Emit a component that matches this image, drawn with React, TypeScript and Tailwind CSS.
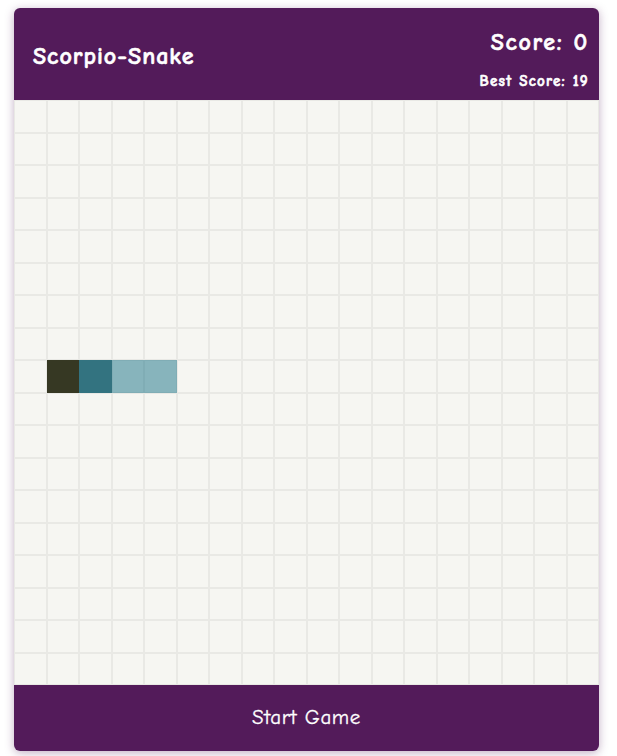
import React from 'react';

const COLS = 18;
const ROWS = 18;

// snake body: [row, col], head first
const snake: Array<[number, number]> = [
  [8, 1],
  [8, 2],
  [8, 3],
  [8, 4],
];

function cellClass(r: number, c: number): string {
  const idx = snake.findIndex(([sr, sc]) => sr === r && sc === c);
  if (idx === 0) return 'bg-[#363823] border-[#363823]';
  if (idx === 1) return 'bg-[#337380] border-[#337380]';
  if (idx > 1) return 'bg-[#87b4bc] border-[#80adb5]';
  return 'bg-[#f6f6f2] border-[#e9e9e5]';
}

export default function App() {
  const cells = [];
  for (let r = 0; r < ROWS; r++) {
    for (let c = 0; c < COLS; c++) {
      cells.push(<div key={`${r}-${c}`} className={`border ${cellClass(r, c)}`} />);
    }
  }

  return (
    <div
      className="min-h-screen bg-white pt-[8px] pl-[14px]"
      style={{ fontFamily: '"Comic Sans MS", "Comic Neue", Lato, "DejaVu Sans", sans-serif' }}
    >
      <div className="w-[585px] rounded-[6px] overflow-hidden shadow-[0_2px_10px_rgba(83,27,90,0.35)]">
        {/* Header */}
        <div className="h-[92px] bg-[#531b5a] flex items-start justify-between pl-[19px] pr-[10px] text-white font-bold [-webkit-text-stroke:0.6px_white]">
          <h1 className="mt-[36px] text-[24px] leading-none tracking-[1px]">Scorpio-Snake</h1>
          <div className="flex flex-col items-end">
            <div className="mt-[22px] text-[24px] leading-none tracking-[1.7px]">Score: 0</div>
            <div className="mt-[20px] text-[15px] leading-none tracking-[1.3px]">Best Score: 19</div>
          </div>
        </div>

        {/* Board */}
        <div className="grid grid-cols-[repeat(18,1fr)] grid-rows-[repeat(18,1fr)] h-[585px] bg-[#f6f6f2]">
          {cells}
        </div>

        {/* Footer */}
        <button className="w-full h-[66px] bg-[#531b5a] text-white text-[21px] tracking-[0.6px] [-webkit-text-stroke:0.3px_white] flex items-center justify-center">
          Start Game
        </button>
      </div>
    </div>
  );
}
